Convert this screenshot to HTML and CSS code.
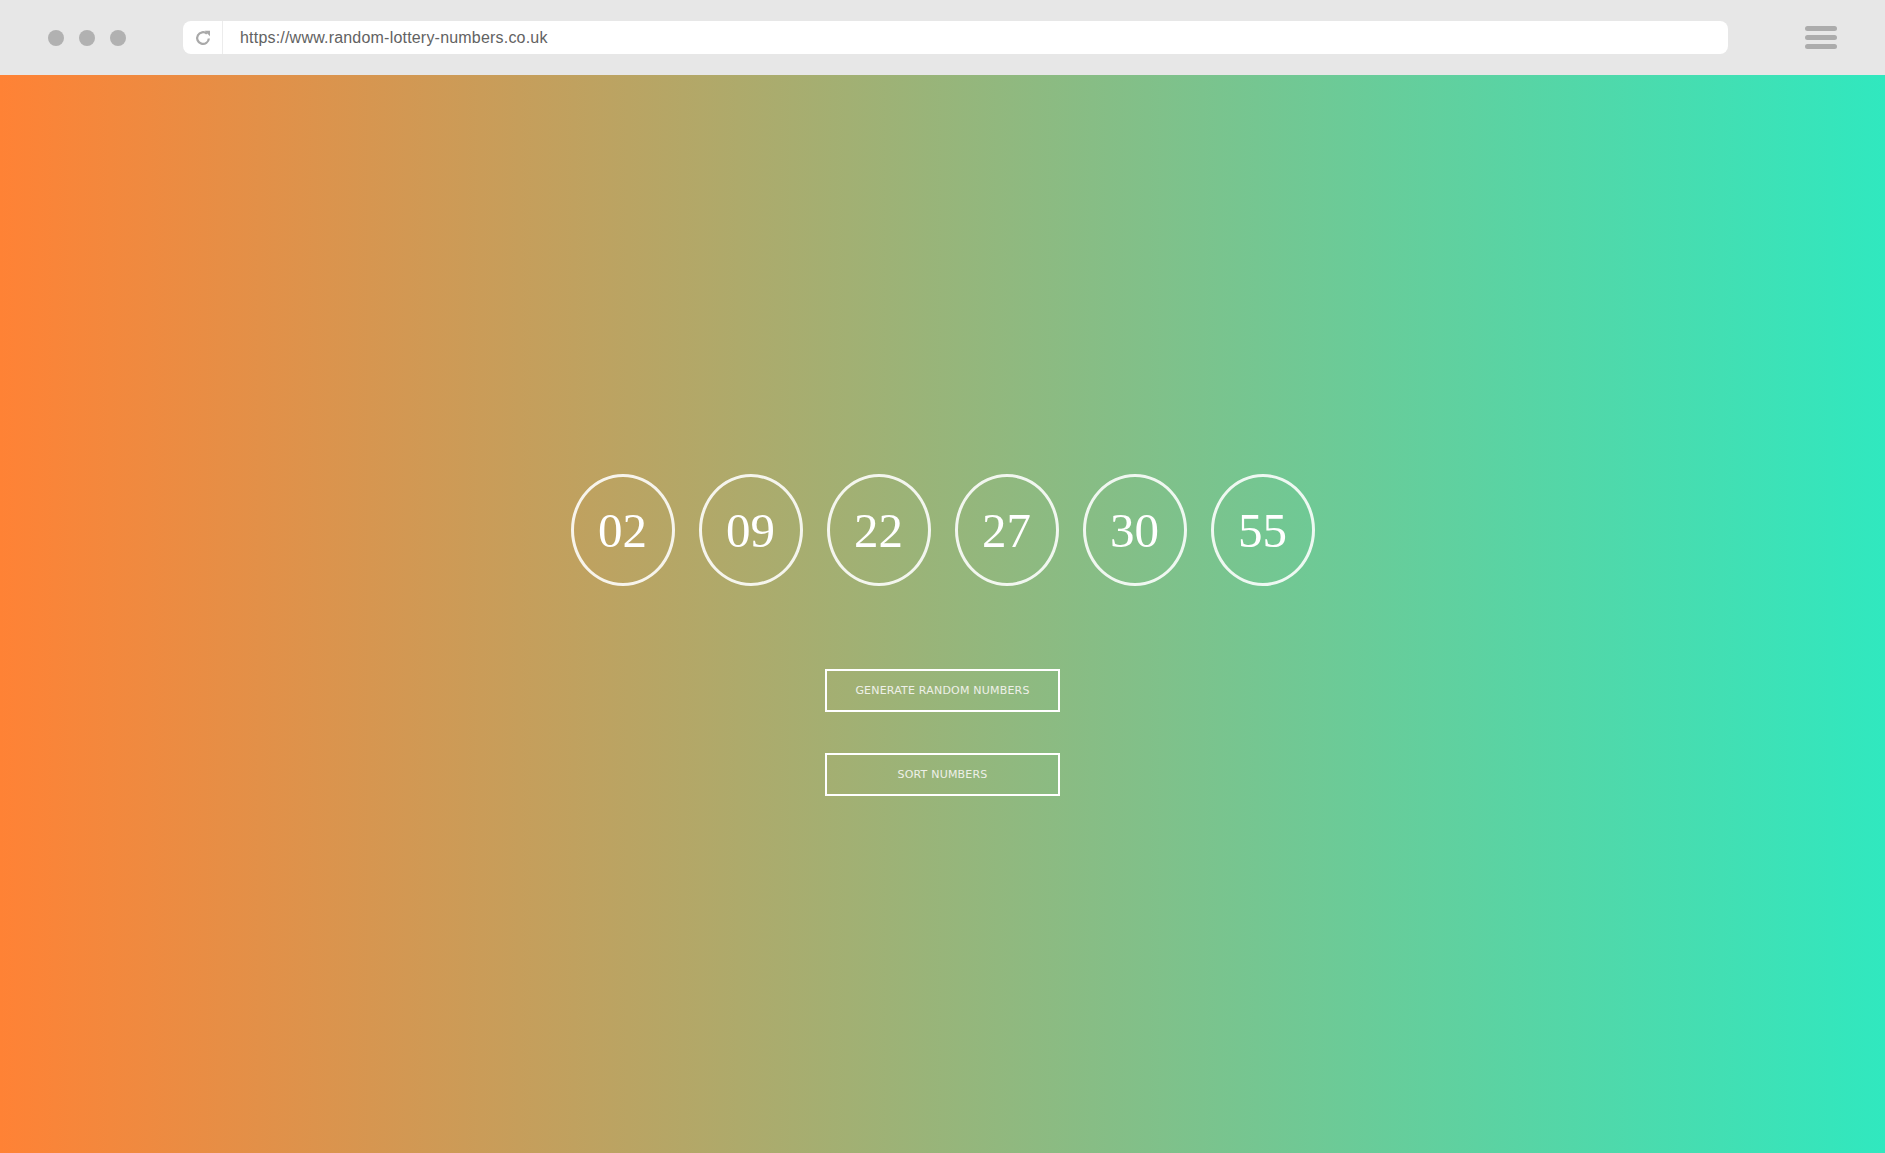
FILE: index.html
```html
<!DOCTYPE html>
<html lang="en">
<head>
<meta charset="utf-8">
<title>Random Lottery Numbers</title>
<link rel="stylesheet" href="styles.css">
</head>
<body>
<header class="chrome">
  <div class="dots"><span class="dot"></span><span class="dot"></span><span class="dot"></span></div>
  <div class="urlbar">
    <div class="reload">
      <svg width="18" height="18" viewBox="0 0 16 16"><path d="M13.2 8.4A5.2 5.2 0 1 1 11.5 4.2" fill="none" stroke="#a9a9a9" stroke-width="2"/><path d="M9.4 1.6 L14.2 1.6 L14.2 6.4 Z" fill="#a9a9a9"/></svg>
    </div>
    <div class="url">https://www.random-lottery-numbers.co.uk</div>
  </div>
  <div class="menu"><span></span><span></span><span></span></div>
</header>
<main class="page">
  <div class="balls">
    <div class="ball">02</div>
    <div class="ball">09</div>
    <div class="ball">22</div>
    <div class="ball">27</div>
    <div class="ball">30</div>
    <div class="ball">55</div>
  </div>
  <div class="actions">
    <button class="btn">GENERATE RANDOM NUMBERS</button>
    <button class="btn">SORT NUMBERS</button>
  </div>
</main>
</body>
</html>
```
FILE: styles.css
```css
* { box-sizing: border-box; }
html, body { margin: 0; padding: 0; }
body { width: 1885px; height: 1153px; overflow: hidden; font-family: "Liberation Sans", Arial, sans-serif; }

.chrome {
  height: 75px;
  background: #e7e7e7;
  display: flex;
  align-items: center;
  padding: 0 48px 0 48px;
}
.dots { display: flex; gap: 15px; }
.dot { width: 16px; height: 16px; border-radius: 50%; background: #b1b1b1; }
.urlbar {
  margin-left: 57px;
  width: 1545px;
  height: 33px;
  background: #fff;
  border-radius: 8px;
  display: flex;
  align-items: center;
}
.reload {
  width: 40px;
  height: 33px;
  border-right: 1px solid #ececec;
  display: flex;
  align-items: center;
  justify-content: center;
}
.url { padding-left: 17px; font-size: 16px; letter-spacing: 0.2px; color: #626262; }
.menu { margin-left: auto; display: flex; flex-direction: column; gap: 4px; width: 32px; }
.menu span { height: 5px; border-radius: 3px; background: #acacac; }

.page {
  height: 1078px;
  background: linear-gradient(to right, #ff8235, #30e8bf);
  display: flex;
  flex-direction: column;
  align-items: center;
  padding-top: 399px;
}
.balls { display: flex; gap: 24px; }
.ball {
  width: 104px;
  height: 112px;
  border: 3px solid rgba(255,255,255,0.88);
  border-radius: 50%;
  display: flex;
  align-items: center;
  justify-content: center;
  color: #fff;
  font-family: "Liberation Serif", "Times New Roman", serif;
  font-size: 49px;
}
.actions { margin-top: 83px; display: flex; flex-direction: column; gap: 41px; }
.btn {
  width: 235px;
  height: 43px;
  background: transparent;
  border: 2px solid #fff;
  color: #eef0e8;
  font-family: "DejaVu Sans", Verdana, sans-serif;
  font-size: 11px;
  letter-spacing: 0.2px;
  padding: 0;
}
```
